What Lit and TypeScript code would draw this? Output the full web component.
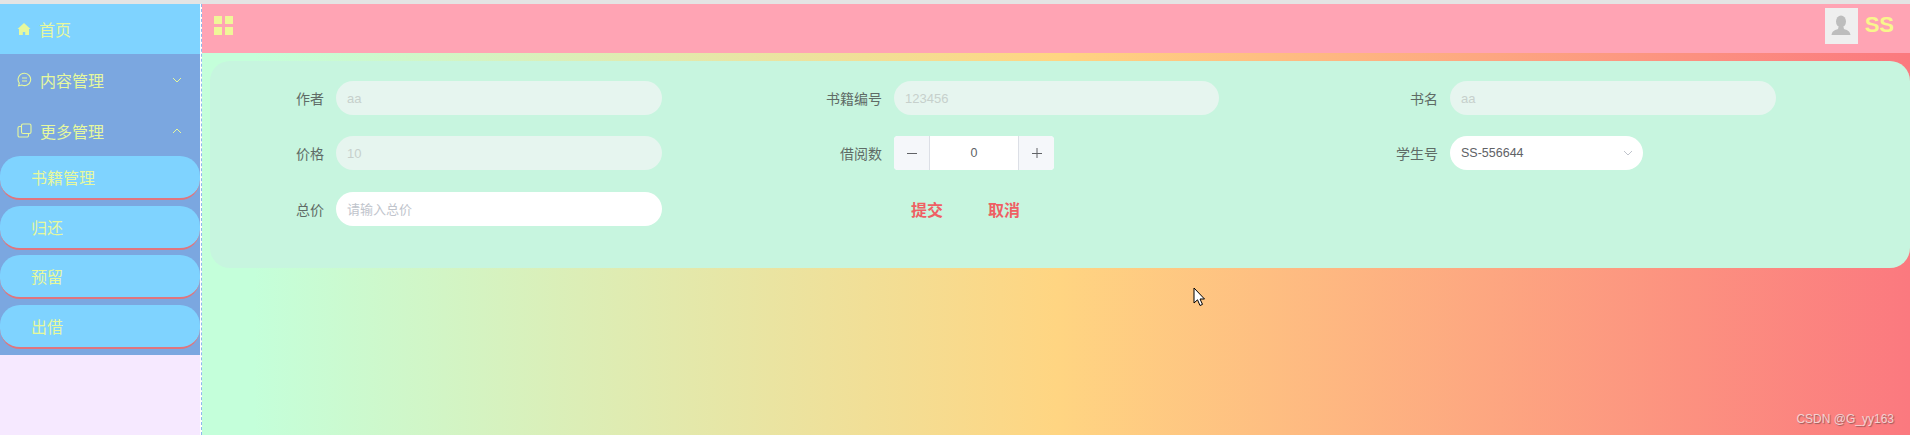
import { LitElement, html, css } from "lit";
import { customElement } from "lit/decorators.js";

const chevron = (up: boolean) => html`<svg class="chev" viewBox="0 0 12 12" width="12" height="12" fill="none" stroke="currentColor" stroke-width="1"><path d=${up ? "M2 8 L6 4 L10 8" : "M2 4 L6 8 L10 4"}></path></svg>`;

@customElement("app-root")
export class AppRoot extends LitElement {
  static styles = css`
    :host { display: block; width: 1910px; height: 435px; overflow: hidden; font-family: "Liberation Sans", "Noto Sans CJK SC", sans-serif; background: #e4e4e4; }
    * { box-sizing: border-box; }
    .app { display: flex; height: 431px; margin-top: 4px; }
    .side { width: 200px; flex: none; background: #f6e9ff; color: #e6f89d; font-size: 16px; }
    .divider { width: 2px; flex: none; border-right: 1px dashed #8fb8ee; background: #fff; }
    .home { height: 50px; background: #7fd3ff; display: flex; align-items: center; padding-left: 17px; gap: 8px; }
    .sect { height: 301px; background: #7ba7e0; }
    .head { height: 51px; display: flex; align-items: center; padding: 0 17px; gap: 8px; }
    .head span { flex: 1; }
    .chev { color: #e6f89d; }
    .item { height: 44px; margin-bottom: 5.67px; padding-left: 31px; display: flex; align-items: center; background: #7fd3ff; border-radius: 20px; border-bottom: 2px solid #e0757d; }
    .main { flex: 1; min-width: 0; display: flex; flex-direction: column; background: linear-gradient(90deg, #c4ffda 0%, #c4ffda 3%, #ffd582 50%, #fb797f 100%); }
    .top { height: 49px; background: #ffa4b4; display: flex; align-items: center; padding: 0 16px 0 12px; }
    .grid4 { display: grid; grid-template-columns: 8px 8px; gap: 3px; margin-top: -6px; }
    .grid4 i { width: 8px; height: 8px; background: #f0f698; display: block; }
    .spacer { flex: 1; }
    .avatar { width: 33px; height: 36px; background: #efefef; display: flex; align-items: center; justify-content: center; margin-right: 7px; margin-top: -5px; }
    .user { color: #f9f68c; font-size: 22px; font-weight: 700; margin-top: -8px; }
    .card { margin: 8px 0 0 8px; height: 207px; background: #c7f5df; border-radius: 20px; padding-top: 20px; display: grid; grid-template-columns: 558px 556px 1fr; grid-template-rows: 34px 34px 34px; row-gap: 21px; align-content: start; color: #606266; font-size: 14px; }
    .card > .f:nth-child(n+7) { margin-top: 1px; }
    .f { display: flex; align-items: center; }
    .lab { width: 114px; text-align: right; margin-right: 12px; flex: none; color: #5f6b66; font-size: 14px; }
    .inp { width: 326px; height: 34px; border-radius: 17px; background: #e6f5ef; color: #c6d0cc; font-size: 13px; padding: 0 11px; display: flex; align-items: center; }
    .inp.mid { width: 325px; }
    .inp.live { background: #fff; color: #c0c4cc; }
    .step { width: 160px; height: 34px; display: flex; background: #fff; border-radius: 4px; overflow: hidden; }
    .step b { width: 36px; background: #f5f7fa; color: #606266; font-weight: 400; display: flex; align-items: center; justify-content: center; }
    .step b:first-child { border-right: 1px solid #dcdfe6; }
    .step b:last-child { border-left: 1px solid #dcdfe6; }
    .step span { flex: 1; text-align: center; line-height: 34px; font-size: 12.5px; color: #606266; }
    .sel { width: 193px; height: 34px; border-radius: 17px; background: #fff; color: #606266; font-size: 12.5px; padding: 0 11px; display: flex; align-items: center; justify-content: space-between; }
    .sel .chev { color: #c0c4cc; margin-right: -2px; }
    .btns { padding-left: 143px; gap: 45px; color: #ef5f64; font-size: 16px; font-weight: 700; }
    .rest { flex: 1; position: relative; }
    .cursor { position: absolute; left: 991px; top: 19px; }
    .mark { position: absolute; right: 16px; bottom: 9px; font-size: 12px; color: #f4d2d2; text-shadow: 1px 1px 1px #9a5a5a; }
  `;

  render() {
    return html`<div class="app">
      <aside class="side">
        <div class="home">
          <svg width="14" height="14" viewBox="0 0 14 14" fill="currentColor"><path d="M7 1 L13.5 7 L12 7 L12 13 L8.2 13 L8.2 10 L5.8 10 L5.8 13 L2 13 L2 7 L.5 7 Z"></path></svg>
          <span>首页</span>
        </div>
        <div class="sect">
          <div class="head">
            <svg width="15" height="15" viewBox="0 0 15 15" fill="none" stroke="currentColor" stroke-width="1.1"><path d="M7.5 1.2 A6.2 6.2 0 1 1 4.8 13 L1.6 13.8 L2.3 11 A6.2 6.2 0 0 1 7.5 1.2 Z"></path><path d="M5 6 H10 M5 9 H10"></path></svg>
            <span>内容管理</span>${chevron(false)}
          </div>
          <div class="head">
            <svg width="15" height="15" viewBox="0 0 15 15" fill="none" stroke="currentColor" stroke-width="1.1"><rect x="4.5" y="1" width="9.5" height="9.5" rx="1.5"></rect><path d="M4.5 3.5 H2.5 A1.5 1.5 0 0 0 1 5 V12.5 A1.5 1.5 0 0 0 2.5 14 H10 A1.5 1.5 0 0 0 11.5 12.5 V10.5"></path></svg>
            <span>更多管理</span>${chevron(true)}
          </div>
          <div class="item">书籍管理</div>
          <div class="item">归还</div>
          <div class="item">预留</div>
          <div class="item">出借</div>
        </div>
      </aside>
      <div class="divider"></div>
      <main class="main">
        <header class="top">
          <div class="grid4"><i></i><i></i><i></i><i></i></div>
          <div class="spacer"></div>
          <div class="avatar"><svg width="20" height="22" viewBox="0 0 20 22" fill="#bdbdbd"><ellipse cx="10" cy="6.5" rx="5" ry="6"></ellipse><path d="M7.5 12 L12.5 12 L13 14 C16 15 19 16 19.5 20 L.5 20 C1 16 4 15 7 14 Z"></path></svg></div>
          <div class="user">SS</div>
        </header>
        <section class="card">
          <div class="f"><span class="lab">作者</span><div class="inp">aa</div></div>
          <div class="f"><span class="lab">书籍编号</span><div class="inp mid">123456</div></div>
          <div class="f"><span class="lab">书名</span><div class="inp">aa</div></div>
          <div class="f"><span class="lab">价格</span><div class="inp">10</div></div>
          <div class="f"><span class="lab">借阅数</span>
            <div class="step"><b><svg width="12" height="12" viewBox="0 0 12 12" stroke="currentColor"><path d="M1 6.5 H11"></path></svg></b><span>0</span><b><svg width="12" height="12" viewBox="0 0 12 12" stroke="currentColor"><path d="M1 6.5 H11 M6 1 V11"></path></svg></b></div>
          </div>
          <div class="f"><span class="lab">学生号</span><div class="sel">SS-556644 ${chevron(false)}</div></div>
          <div class="f"><span class="lab">总价</span><div class="inp live">请输入总价</div></div>
          <div class="f btns"><span>提交</span><span>取消</span></div>
        </section>
        <div class="rest">
          <svg class="cursor" width="13" height="20" viewBox="0 0 13 20"><path d="M1 1 V16 L4.5 12.8 L7 18.5 L9.5 17.4 L7 12 L11.5 12 Z" fill="#fff" stroke="#000" stroke-width="1"></path></svg>
          <div class="mark">CSDN @G_yy163</div>
        </div>
      </main>
    </div>`;
  }
}
